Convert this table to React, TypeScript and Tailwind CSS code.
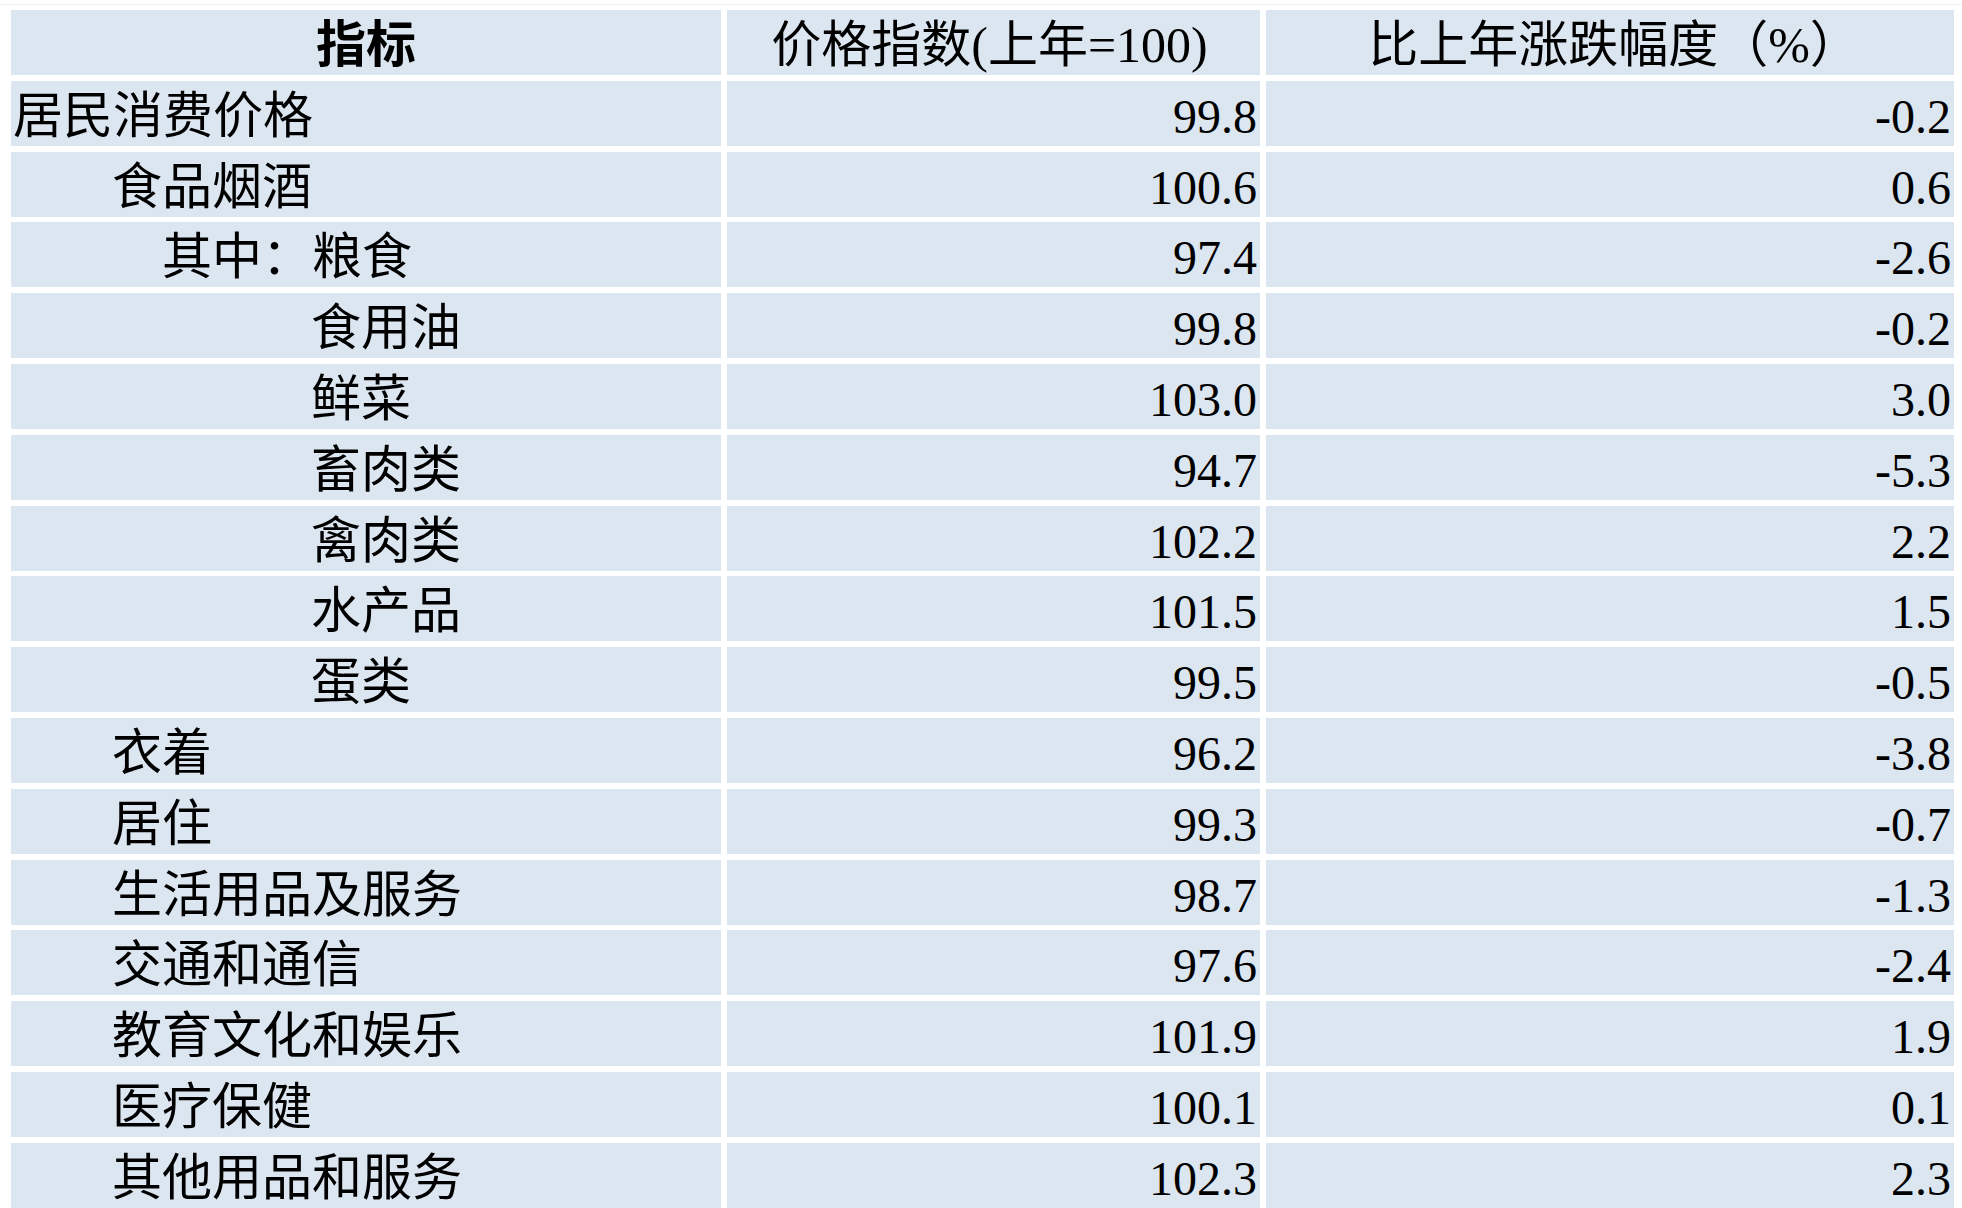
import React from "react";

type Row = { label: string; level: number; index: string; change: string };

const rows: Row[] = [
  { label: "居民消费价格", level: 0, index: "99.8", change: "-0.2" },
  { label: "食品烟酒", level: 1, index: "100.6", change: "0.6" },
  { label: "其中：粮食", level: 2, index: "97.4", change: "-2.6" },
  { label: "食用油", level: 3, index: "99.8", change: "-0.2" },
  { label: "鲜菜", level: 3, index: "103.0", change: "3.0" },
  { label: "畜肉类", level: 3, index: "94.7", change: "-5.3" },
  { label: "禽肉类", level: 3, index: "102.2", change: "2.2" },
  { label: "水产品", level: 3, index: "101.5", change: "1.5" },
  { label: "蛋类", level: 3, index: "99.5", change: "-0.5" },
  { label: "衣着", level: 1, index: "96.2", change: "-3.8" },
  { label: "居住", level: 1, index: "99.3", change: "-0.7" },
  { label: "生活用品及服务", level: 1, index: "98.7", change: "-1.3" },
  { label: "交通和通信", level: 1, index: "97.6", change: "-2.4" },
  { label: "教育文化和娱乐", level: 1, index: "101.9", change: "1.9" },
  { label: "医疗保健", level: 1, index: "100.1", change: "0.1" },
  { label: "其他用品和服务", level: 1, index: "102.3", change: "2.3" },
];

// indentation of the first column, by level
const indent = ["pl-[2px]", "pl-[101px]", "pl-[151px]", "pl-[300px]"];

const cell = "h-[65px] bg-[#dce6f1] pt-[6px] leading-[59px] whitespace-nowrap";

const App: React.FC = () => {
  return (
    <div
      className="w-[1962px] h-[1208px] overflow-hidden bg-white text-black text-[48px] pt-[4px]"
      style={{ fontFamily: '"Liberation Serif", "Noto Sans CJK SC", serif' }}
    >
      <div className="h-px bg-[#f0f0f0]" />
      <div className="mt-[5px] ml-[11px] grid grid-cols-[710px_533px_688px] auto-rows-[65px] gap-x-[6px] gap-y-[5.8px]">
        <div className={`${cell} text-center font-bold text-[50px]`}>指标</div>
        <div className={`${cell} text-center pr-[8px] text-[50px]`}>价格指数(上年=100)</div>
        <div className={`${cell} text-center pl-[8px] text-[50px]`}>比上年涨跌幅度（%）</div>

        {rows.map((r, i) => (
          <React.Fragment key={i}>
            <div className={`${cell} ${indent[r.level]} text-[50px]`}>{r.label}</div>
            <div className={`${cell} text-right pr-[3px]`}>{r.index}</div>
            <div className={`${cell} text-right pr-[3px]`}>{r.change}</div>
          </React.Fragment>
        ))}
      </div>
    </div>
  );
};

export default App;
